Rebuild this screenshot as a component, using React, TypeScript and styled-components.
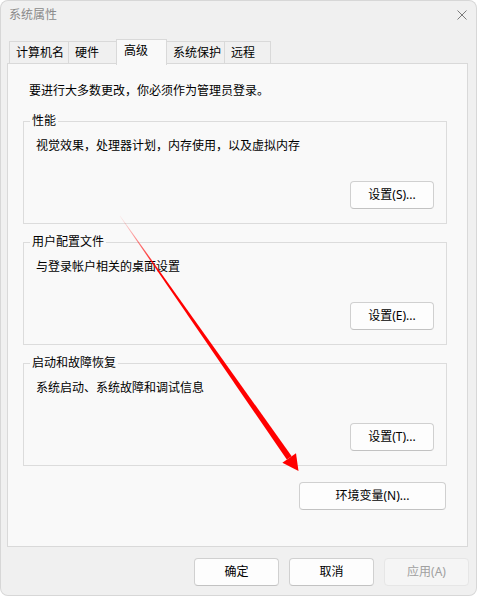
import React from "react";
import styled, { createGlobalStyle } from "styled-components";

const GlobalStyle = createGlobalStyle`
  html, body { margin: 0; padding: 0; background: #ffffff; }
  body {
    font-family: "Noto Sans", "Noto Sans CJK SC", sans-serif;
    font-size: 12px;
    color: #000;
  }
  * { box-sizing: border-box; }
`;

const Window = styled.div`
  position: relative;
  width: 477px;
  height: 596px;
  background: #f0f0f0;
  border-radius: 8px;
  overflow: hidden;
  box-shadow: inset 0 0 0 1px rgba(0, 0, 0, 0.1);
  display: flex;
  flex-direction: column;
`;

const TitleBar = styled.div`
  height: 29px;
  padding: 0 10px 0 9px;
  display: flex;
  align-items: center;
  justify-content: space-between;
`;

const Title = styled.span`
  font-size: 12px;
  line-height: 16px;
  color: #8a8a8a;
`;

const CloseIcon = styled.svg`
  width: 10px;
  height: 10px;
  display: block;
`;

const TabStrip = styled.div`
  margin-top: 10px;
  height: 24px;
  padding-left: 9px;
  display: flex;
  align-items: flex-end;
  position: relative;
  z-index: 1;
`;

const Tab = styled.div<{ $w: number; $active?: boolean }>`
  width: ${(p) => p.$w}px;
  height: ${(p) => (p.$active ? 26 : 22)}px;
  margin-bottom: ${(p) => (p.$active ? -2 : 0)}px;
  margin-left: -1px;
  &:first-child { margin-left: 0; }
  padding-left: ${(p) => (p.$active ? 7 : 6)}px;
  padding-bottom: ${(p) => (p.$active ? 4 : 0)}px;
  display: flex;
  align-items: center;
  border: 1px solid #d9d9d9;
  border-bottom: none;
  background: ${(p) => (p.$active ? "#f9f9f9" : "#f0f0f0")};
  position: relative;
  z-index: ${(p) => (p.$active ? 2 : 0)};
  font-size: 12px;
  line-height: 16px;
  white-space: nowrap;
`;

const Panel = styled.div`
  margin-left: 7px;
  width: 461px;
  height: 484px;
  border: 1px solid #d9d9d9;
  background: #f9f9f9;
  padding: 19px 0 0 15px;
  display: flex;
  flex-direction: column;
`;

const Intro = styled.div`
  margin-left: 6px;
  font-size: 12px;
  line-height: 16px;
`;

const Group = styled.fieldset<{ $first?: boolean }>`
  margin: ${(p) => (p.$first ? 15 : 11)}px 0 0 0;
  width: 424px;
  padding: 10px 12px 14px 12px;
  border: 1px solid #dcdcdc;
  min-inline-size: 0;
`;

const Legend = styled.legend`
  padding: 0 2px;
  margin-left: -6px;
  font-size: 12px;
  line-height: 14px;
`;

const Desc = styled.div`
  font-size: 12px;
  line-height: 16px;
`;

const ButtonRow = styled.div<{ $top: number }>`
  margin-top: ${(p) => p.$top}px;
  display: flex;
  justify-content: flex-end;
`;

const Button = styled.button<{ $w: number; $disabled?: boolean }>`
  width: ${(p) => p.$w}px;
  height: 28px;
  padding: 0;
  border: 1px solid ${(p) => (p.$disabled ? "#e6e6e6" : "#d0d0d0")};
  border-bottom-color: ${(p) => (p.$disabled ? "#e6e6e6" : "#c2c2c2")};
  border-radius: 4px;
  background: ${(p) => (p.$disabled ? "#f5f5f5" : "#fdfdfd")};
  color: ${(p) => (p.$disabled ? "#a0a0a0" : "#000")};
  font-family: "Noto Sans", "Noto Sans CJK SC", sans-serif;
  font-size: 12px;
  line-height: 16px;
  display: flex;
  align-items: center;
  justify-content: center;
`;

const EnvRow = styled.div`
  width: 423px;
  margin-top: 16px;
  display: flex;
  justify-content: flex-end;
`;

const Footer = styled.div`
  margin-top: 11px;
  padding-right: 8px;
  display: flex;
  justify-content: flex-end;
  gap: 10px;
`;

const ArrowLayer = styled.svg`
  position: absolute;
  left: 0;
  top: 0;
  width: 477px;
  height: 596px;
  pointer-events: none;
  z-index: 5;
`;

const tabs = [
  { label: "计算机名", w: 60 },
  { label: "硬件", w: 49 },
  { label: "高级", w: 51, active: true },
  { label: "系统保护", w: 59 },
  { label: "远程", w: 47 },
];

const groups = [
  { legend: "性能", desc: "视觉效果，处理器计划，内存使用，以及虚拟内存", btn: "设置(S)..." },
  { legend: "用户配置文件", desc: "与登录帐户相关的桌面设置", btn: "设置(E)..." },
  { legend: "启动和故障恢复", desc: "系统启动、系统故障和调试信息", btn: "设置(T)..." },
];

export default function App() {
  return (
    <>
      <GlobalStyle />
      <Window>
        <TitleBar>
          <Title>系统属性</Title>
          <CloseIcon viewBox="0 0 10 10">
            <path d="M0.5 0.5 L9.5 9.5 M9.5 0.5 L0.5 9.5" stroke="#7a7a7a" strokeWidth="1" fill="none" />
          </CloseIcon>
        </TitleBar>
        <TabStrip>
          {tabs.map((t) => (
            <Tab key={t.label} $w={t.w} $active={t.active}>
              {t.label}
            </Tab>
          ))}
        </TabStrip>
        <Panel>
          <Intro>要进行大多数更改，你必须作为管理员登录。</Intro>
          {groups.map((g, i) => (
            <Group key={g.legend} $first={i === 0}>
              <Legend>{g.legend}</Legend>
              <Desc>{g.desc}</Desc>
              <ButtonRow $top={27}>
                <Button $w={84}>{g.btn}</Button>
              </ButtonRow>
            </Group>
          ))}
          <EnvRow>
            <Button $w={147}>环境变量(N)...</Button>
          </EnvRow>
        </Panel>
        <Footer>
          <Button $w={85}>确定</Button>
          <Button $w={85}>取消</Button>
          <Button $w={85} $disabled>
            应用(A)
          </Button>
        </Footer>
        <ArrowLayer viewBox="0 0 477 596">
          <defs>
            <linearGradient id="arrowFade" gradientUnits="userSpaceOnUse" x1="120" y1="216" x2="298" y2="471">
              <stop offset="0" stopColor="#ff0000" stopOpacity="0.05" />
              <stop offset="0.22" stopColor="#ff0000" stopOpacity="1" />
              <stop offset="1" stopColor="#ff0000" stopOpacity="1" />
            </linearGradient>
          </defs>
          <polygon
            points="120.2,215.86 119.8,216.14 286.8,459.6 291.7,456.2"
            fill="url(#arrowFade)"
          />
          <polygon points="298.5,471 282.4,462.8 296.0,453.3" fill="#ff0000" />
        </ArrowLayer>
      </Window>
    </>
  );
}
